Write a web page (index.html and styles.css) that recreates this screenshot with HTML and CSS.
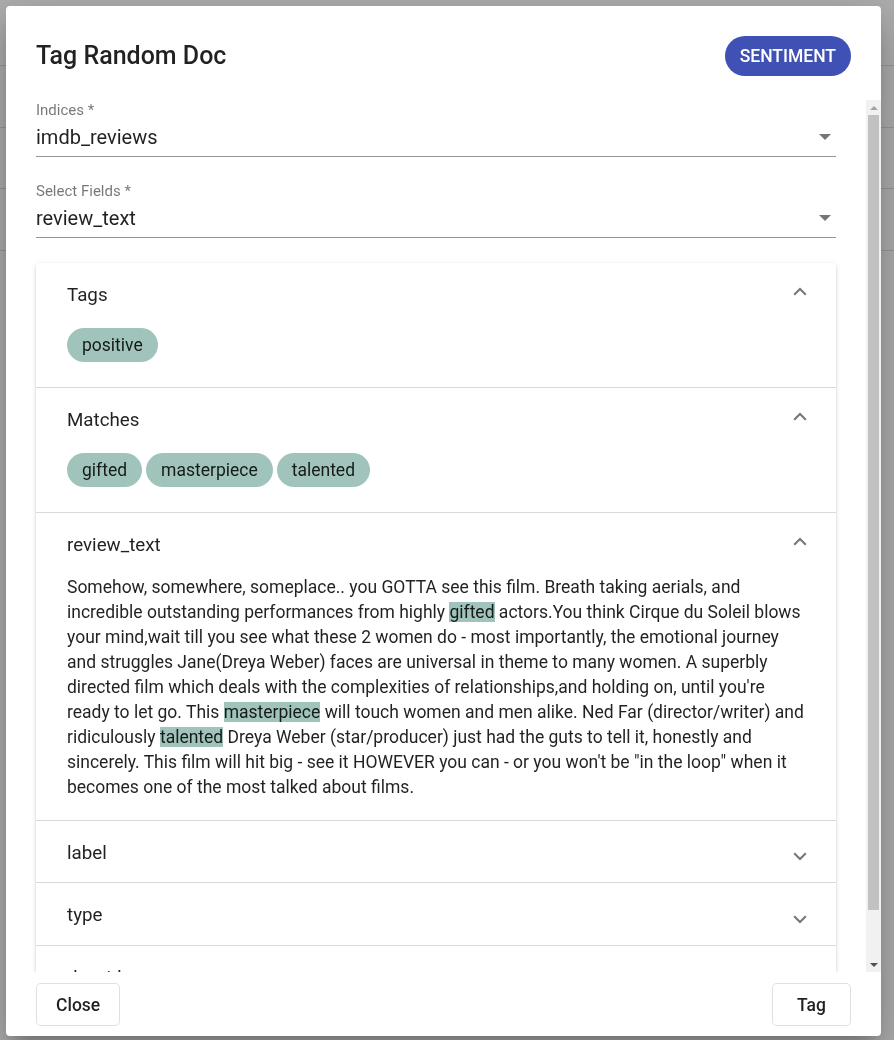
FILE: index.html
```html
<!DOCTYPE html>
<html lang="en">
<head>
<meta charset="utf-8">
<title>Tag Random Doc</title>
<link rel="stylesheet" href="styles.css">
</head>
<body>
<div class="page">
  <div class="page-row"></div><div class="page-row"></div><div class="page-row"></div><div class="page-row"></div>
</div>
<div class="backdrop"></div>
<div class="dialog">
  <div class="dialog-head">
    <h2 class="dialog-title">Tag Random Doc</h2>
    <button class="btn-flat">Sentiment</button>
  </div>
  <div class="dialog-body">
    <div class="dialog-content">
      <div class="field">
        <div class="field-label">Indices *</div>
        <div class="field-control"><span class="field-value">imdb_reviews</span><span class="select-arrow"></span></div>
      </div>
      <div class="field">
        <div class="field-label">Select Fields *</div>
        <div class="field-control"><span class="field-value">review_text</span><span class="select-arrow"></span></div>
      </div>
      <div class="accordion">
        <section class="panel">
          <header class="panel-header"><span>Tags</span><svg class="chev chev-up" width="14" height="9" viewBox="0 0 14 9"><polyline points="1.2,7.8 7,2 12.8,7.8"/></svg></header>
          <div class="panel-body chips">
            <span class="chip">positive</span>
          </div>
        </section>
        <section class="panel">
          <header class="panel-header"><span>Matches</span><svg class="chev chev-up" width="14" height="9" viewBox="0 0 14 9"><polyline points="1.2,7.8 7,2 12.8,7.8"/></svg></header>
          <div class="panel-body chips">
            <span class="chip">gifted</span><span class="chip">masterpiece</span><span class="chip">talented</span>
          </div>
        </section>
        <section class="panel">
          <header class="panel-header"><span>review_text</span><svg class="chev chev-up" width="14" height="9" viewBox="0 0 14 9"><polyline points="1.2,7.8 7,2 12.8,7.8"/></svg></header>
          <div class="panel-body doc-text">Somehow, somewhere, someplace.. you GOTTA see this film. Breath taking aerials, and incredible outstanding performances from highly <mark class="hl">gifted</mark> actors.You think Cirque du Soleil blows your mind,wait till you see what these 2 women do - most importantly, the emotional journey and struggles Jane(Dreya Weber) faces are universal in theme to many women. A superbly directed film which deals with the complexities of relationships,and holding on, until you're ready to let go. This <mark class="hl">masterpiece</mark> will touch women and men alike. Ned Far (director/writer) and ridiculously <mark class="hl">talented</mark> Dreya Weber (star/producer) just had the guts to tell it, honestly and sincerely. This film will hit big - see it HOWEVER you can - or you won't be "in the loop" when it becomes one of the most talked about films.</div>
        </section>
        <section class="panel">
          <header class="panel-header"><span>label</span><svg class="chev chev-down" width="14" height="9" viewBox="0 0 14 9"><polyline points="1.2,1.2 7,7 12.8,1.2"/></svg></header>
        </section>
        <section class="panel panel-tall">
          <header class="panel-header"><span>type</span><svg class="chev chev-down" width="14" height="9" viewBox="0 0 14 9"><polyline points="1.2,1.2 7,7 12.8,1.2"/></svg></header>
        </section>
        <section class="panel">
          <header class="panel-header"><span>doc_id</span><svg class="chev chev-down" width="14" height="9" viewBox="0 0 14 9"><polyline points="1.2,1.2 7,7 12.8,1.2"/></svg></header>
        </section>
      </div>
    </div>
    <div class="scrollbar">
      <span class="sb-btn"><span class="sb-arrow-up"></span></span>
      <span class="sb-thumb"></span>
      <span class="sb-rest"></span>
      <span class="sb-btn"><span class="sb-arrow-down"></span></span>
    </div>
  </div>
  <div class="dialog-actions">
    <button class="btn-stroked">Close</button>
    <button class="btn-stroked">Tag</button>
  </div>
</div>
</body>
</html>
```

FILE: styles.css
```css
* { box-sizing: border-box; }

body {
  margin: 0;
  font-family: Roboto, "Liberation Sans", sans-serif;
  color: rgba(0, 0, 0, 0.87);
  overflow: hidden;
}

.page {
  height: 1040px;
  background: #fff;
  padding-top: 5px;
  overflow: hidden;
}

.page-row {
  height: 61.4px;
  border-bottom: 1px solid #e0e0e0;
}

.backdrop {
  position: fixed;
  inset: 0;
  background: rgba(0, 0, 0, 0.32);
}

.dialog {
  position: fixed;
  left: 6px;
  top: 6px;
  width: 875px;
  height: 1030px;
  padding: 30px 30px 0;
  background: #fff;
  border-radius: 4px;
  display: flex;
  flex-direction: column;
  box-shadow: 0 11px 15px -7px rgba(0, 0, 0, 0.2),
              0 24px 38px 3px rgba(0, 0, 0, 0.14),
              0 9px 46px 8px rgba(0, 0, 0, 0.12);
}

.dialog-head {
  height: 40px;
  margin-bottom: 24px;
  display: flex;
  align-items: center;
  justify-content: space-between;
  flex: none;
}

.dialog-title {
  margin: 0;
  font-size: 25px;
  font-weight: 500;
  line-height: 32px;
  color: rgba(0, 0, 0, 0.87);
}

.btn-flat {
  height: 40px;
  padding: 0 15px;
  border: none;
  border-radius: 20px;
  background: #3f51b5;
  color: #fff;
  font-family: inherit;
  font-size: 17.5px;
  font-weight: 500;
  text-transform: uppercase;
}

.dialog-body {
  flex: 1;
  min-height: 0;
  margin: 0 -30px;
  display: flex;
}

.dialog-content {
  flex: 1;
  min-width: 0;
  overflow: hidden;
  padding: 0 30px;
}

.scrollbar {
  width: 15px;
  flex: none;
  background: #f1f1f1;
  display: flex;
  flex-direction: column;
  align-items: center;
}

.sb-btn {
  height: 15px;
  width: 15px;
  display: flex;
  align-items: center;
  justify-content: center;
}

.sb-arrow-up {
  width: 0;
  height: 0;
  border-left: 4px solid transparent;
  border-right: 4px solid transparent;
  border-bottom: 4px solid #a3a3a3;
}

.sb-arrow-down {
  width: 0;
  height: 0;
  border-left: 4px solid transparent;
  border-right: 4px solid transparent;
  border-top: 4px solid #505050;
}

.sb-thumb {
  width: 11px;
  height: 795px;
  background: #c1c1c1;
  flex: none;
}

.sb-rest { flex: 1; }

.field {
  margin-bottom: 24px;
  padding-top: 2px;
}

.field-label {
  font-size: 15px;
  line-height: 16px;
  color: rgba(0, 0, 0, 0.54);
}

.field-control {
  height: 39px;
  display: flex;
  align-items: center;
  justify-content: space-between;
  border-bottom: 1px solid rgba(0, 0, 0, 0.42);
}

.field-value {
  font-size: 20px;
  color: rgba(0, 0, 0, 0.87);
}

.select-arrow {
  width: 0;
  height: 0;
  margin-right: 5px;
  border-left: 6px solid transparent;
  border-right: 6px solid transparent;
  border-top: 6px solid rgba(0, 0, 0, 0.54);
}

.accordion {
  margin-top: 25px;
  margin-bottom: 16px;
  background: #fff;
  border-radius: 4px;
  box-shadow: 0 3px 1px -2px rgba(0, 0, 0, 0.2),
              0 2px 2px 0 rgba(0, 0, 0, 0.14),
              0 1px 5px 0 rgba(0, 0, 0, 0.12);
}

.panel + .panel { border-top: 1px solid #d9d9d9; }

.panel-header {
  height: 61px;
  padding: 2px 29px 0 31px;
  display: flex;
  align-items: center;
  justify-content: space-between;
  font-size: 18.75px;
}

.panel-tall .panel-header { height: 62px; }

.chev {
  fill: none;
  stroke: rgba(0, 0, 0, 0.54);
  stroke-width: 2;
}

.chev-up { margin-bottom: 6px; }
.chev-down { margin-top: 8px; }

.panel-body { padding: 0 29px 0 31px; }

.chips {
  display: flex;
  gap: 4px;
  padding-top: 4px;
  padding-bottom: 25px;
}

.chip {
  height: 34px;
  padding: 0 15px;
  border-radius: 17px;
  background: #a0c4bb;
  display: inline-flex;
  align-items: center;
  font-size: 17.5px;
}

.doc-text {
  font-size: 17.5px;
  line-height: 25px;
  padding-top: 1px;
  padding-bottom: 20px;
}

.hl {
  background: #a0c4bb;
  color: inherit;
}

.dialog-actions {
  flex: none;
  height: 64px;
  padding: 11px 0 10px;
  display: flex;
  justify-content: space-between;
  align-items: center;
}

.btn-stroked {
  height: 43px;
  min-width: 79px;
  padding: 0 19px;
  background: #fff;
  border: 1px solid rgba(0, 0, 0, 0.12);
  border-radius: 5px;
  font-family: inherit;
  font-size: 17.5px;
  font-weight: 500;
  color: rgba(0, 0, 0, 0.87);
}
```
